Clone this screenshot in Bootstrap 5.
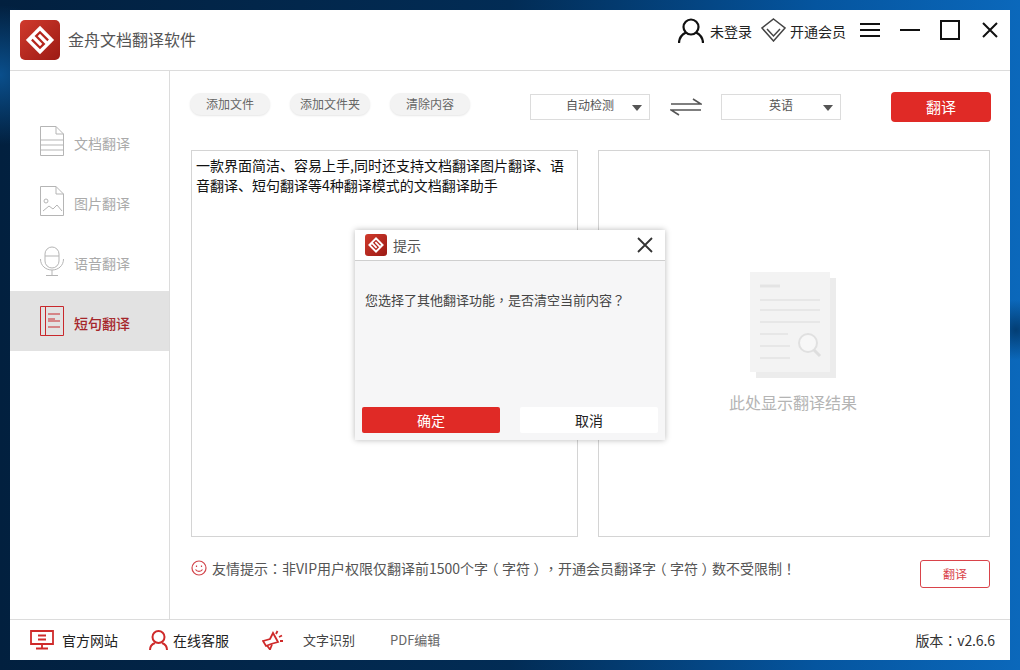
<!DOCTYPE html>
<html lang="zh">
<head>
<meta charset="utf-8">
<title>金舟文档翻译软件</title>
<link rel="stylesheet" href="https://cdn.jsdelivr.net/npm/bootstrap@5.3.0/dist/css/bootstrap.min.css">
<style>
html,body{height:100%;}
body{margin:0;padding:10px;overflow:hidden;font-family:"Noto Sans CJK SC","Liberation Sans",sans-serif;font-size:13px;color:#333;
  background:radial-gradient(circle at 0 75px,#0a4f8c,transparent 70px),radial-gradient(circle at 1016px 330px,#033e74,transparent 30px),linear-gradient(90deg,#02203f 0%,#022c55 50%,#05559f 80%,#0b68bb 100%);}
.app-win{width:1000px;height:650px;background:#fff;position:relative;display:flex;flex-direction:column;}
.app-head{height:61px;flex:none;border-bottom:1px solid #dcdcdc;padding:0 10px;display:flex;align-items:center;}
.app-title{font-size:16px;color:#555;margin-left:8px;padding-bottom:2px;}
.head-tools{margin-left:auto;display:flex;align-items:center;height:100%;padding-bottom:20px;color:#222;font-size:14px;}
.logo-box{background:linear-gradient(135deg,#d03a2c,#9c1a14);border-radius:5px;display:flex;align-items:center;justify-content:center;flex:none;}
.app-mid{flex:1;display:flex;min-height:0;}
.app-side{width:160px;flex:none;border-right:1px solid #dcdcdc;padding-top:40px;}
.side-item{height:60px;display:flex;align-items:center;padding-left:30px;color:#aaa;font-size:14px;gap:10px;}
.side-item span{padding-top:4px;}
.side-on{background:#e2e2e2;color:#a5262a;}
.app-main{flex:1;padding:21px 19px 0 20px;position:relative;min-width:0;}
.tool-row{height:30px;display:flex;align-items:center;}
.pill-btn{width:80px;height:22px;border-radius:11px;background:#f3f3f3;color:#666;font-size:12px;display:flex;align-items:center;justify-content:center;margin-right:20px;margin-bottom:6px;box-shadow:0 1px 2px #e6e6e6;}
.lang-sel{width:120px;height:26px;border:1px solid #dcdcdc;display:flex;align-items:center;justify-content:center;font-size:12px;color:#555;position:relative;padding-bottom:4px;}
.lang-sel::after{content:"";position:absolute;right:7px;top:10px;border:5px solid transparent;border-top:6px solid #555;border-bottom:0;}
.go-btn{width:100px;height:30px;border:0;border-radius:4px;background:#e02a26;color:#fff;font-size:15px;display:flex;align-items:center;justify-content:center;margin-left:50px;}
.panes{display:flex;gap:20px;margin-top:28px;height:387px;margin-left:1px;}
.pane-l{width:387px;border:1px solid #d4d4d4;padding:4px 4px;font-size:14px;line-height:20px;color:#111;}
.pane-r{width:392px;border:1px solid #d4d4d4;display:flex;flex-direction:column;align-items:center;padding:121px 2px 0 0;}
.pane-hint{color:#b4b4b4;font-size:16px;margin-top:12px;}
.tip-row{display:flex;align-items:center;margin-top:22px;height:30px;margin-left:1px;color:#555;font-size:14px;}
.tip-text{margin-left:5px;margin-top:-12px;white-space:nowrap;}
.tip-row svg{margin-top:-12px;}
.ghost-btn{margin-left:auto;width:70px;height:28px;border:1px solid #d9434a;border-radius:3px;color:#d9434a;font-size:12px;display:flex;align-items:center;justify-content:center;margin-right:1px;}
.app-foot{height:41px;flex:none;border-top:1px solid #dcdcdc;display:flex;align-items:center;padding:0 15px 0 20px;font-size:14px;color:#222;}
.foot-link{display:flex;align-items:center;}
.foot-dim{font-size:13px;color:#444;}
.foot-ver{color:#333;letter-spacing:-.1px;}
.dlg{position:absolute;left:345px;top:220px;width:310px;height:210px;background:#f6f6f7;box-shadow:0 0 6px rgba(0,0,0,.28);display:flex;flex-direction:column;}
.dlg-head{height:31px;flex:none;background:#fff;border-bottom:1px solid #cfcfcf;display:flex;align-items:center;padding:0 12px 0 10px;font-size:14px;color:#555;}
.dlg-body{flex:1;padding:29px 10px 0;color:#444;font-size:13px;line-height:20px;}
.dlg-foot{display:flex;justify-content:space-between;padding:0 7px 7px;}
.dlg-ok,.dlg-no{width:138px;height:26px;border:0;border-radius:2px;font-size:14px;display:flex;align-items:center;justify-content:center;}
.dlg-ok{background:#e02a26;color:#fff;}
.dlg-no{background:#fff;color:#222;}
.pun{display:inline-block;width:1em;font-family:"Noto Sans CJK TC",sans-serif;text-align:center;}
.pun-h{display:inline-block;width:1em;text-align:center;font-feature-settings:"halt";}
</style>
</head>
<body>
<div class="app-win">
  <header class="app-head">
    <div class="logo-box" style="width:40px;height:40px">
      <svg width="32" height="32" viewBox="0 0 32 32"><g transform="rotate(45 16 16)"><rect x="6" y="6" width="20" height="20" fill="#fff"/><path d="M22 10.500H10.500V16H21.500V21.500H10" fill="none" stroke="#b5251c" stroke-width="2.200"/></g></svg>
    </div>
    <span class="app-title">金舟文档翻译软件</span>
    <div class="head-tools">
      <svg width="26" height="25" viewBox="0 0 26 25" fill="none" stroke="#111" stroke-width="2.200"><circle cx="13" cy="9" r="7.500"/><path d="M1 25c0-6 4-9 7-10.500M25 25c0-6-4-9-7-10.500"/></svg>
      <span style="margin-left:6px;padding-top:2px">未登录</span>
      <svg style="margin-left:9px" width="25" height="24" viewBox="0 0 25 24" fill="none" stroke="#444" stroke-width="1.500"><path d="M12.500 1 24 10 12.500 23 1 10Z"/><path d="M6 11 12.500 18 19 11"/></svg>
      <span style="margin-left:4px;padding-top:2px">开通会员</span>
      <svg style="margin-left:14px" width="20" height="16" viewBox="0 0 20 16" stroke="#111" stroke-width="2"><path d="M0 2H20M0 8H20M0 14H20"/></svg>
      <svg style="margin-left:20px" width="20" height="4" viewBox="0 0 20 4" stroke="#111" stroke-width="2"><path d="M0 2H20"/></svg>
      <svg style="margin-left:20px" width="20" height="20" viewBox="0 0 20 20" fill="none" stroke="#111" stroke-width="2"><rect x="1" y="1" width="18" height="18"/></svg>
      <svg style="margin-left:22px;margin-right:2px" width="16" height="16" viewBox="0 0 16 16" stroke="#111" stroke-width="2"><path d="M1 1 15 15M15 1 1 15"/></svg>
    </div>
  </header>

  <div class="app-mid">
    <nav class="app-side">
      <div class="side-item">
        <svg width="24" height="30" viewBox="0 0 24 30" fill="none" stroke="#b5b5b5"><path d="M.5.5H16L23.500 8V29.500H.5Z"/><path d="M16 .5V8H23.500M.5 14H23.500M.5 19H23.500M.5 24H23.500"/></svg>
        <span>文档翻译</span>
      </div>
      <div class="side-item">
        <svg width="24" height="30" viewBox="0 0 24 30" fill="none" stroke="#b5b5b5"><path d="M.5.5H16L23.500 8V29.500H.5Z"/><path d="M16 .5V8H23.500M3 25 9 20 13 23 17 19 22 25"/><circle cx="6" cy="15" r="2"/></svg>
        <span>图片翻译</span>
      </div>
      <div class="side-item">
        <svg width="24" height="30" viewBox="0 0 24 30" fill="none" stroke="#b5b5b5"><rect x="5" y="1" width="14" height="21" rx="7"/><path d="M5 10H19M.5 13C.5 20 6 24 12 24S23.500 20 23.500 13M12 24V29M6 29.500H18"/></svg>
        <span>语音翻译</span>
      </div>
      <div class="side-item side-on">
        <svg width="24" height="30" viewBox="0 0 24 30" fill="none" stroke="#c8282c"><path d="M.5.5H23.500V29.500H.5ZM5.500.5V29.500M8 8H20M8 13H15M8 15H20M8 21H20"/></svg>
        <span class="fw-medium">短句翻译</span>
      </div>
    </nav>

    <main class="app-main">
      <div class="tool-row">
        <div class="pill-btn">添加文件</div>
        <div class="pill-btn">添加文件夹</div>
        <div class="pill-btn" style="margin-right:60px">清除内容</div>
        <div class="lang-sel">自动检测</div>
        <svg style="margin:0 19px 0 20px" width="32" height="18" viewBox="0 0 32 18" fill="none" stroke="#555" stroke-width="1.600"><path d="M1 6H31L23 1M31 12H1L9 17"/></svg>
        <div class="lang-sel">英语</div>
        <div class="go-btn">翻译</div>
      </div>
      <div class="panes">
        <div class="pane-l">一款界面简洁、容易上手,同时还支持文档翻译图片翻译、语音翻译、短句翻译等4种翻译模式的文档翻译助手</div>
        <div class="pane-r">
          <svg width="86" height="106" viewBox="0 0 86 106">
            <rect x="6" y="6" width="80" height="100" fill="#ececec"/>
            <rect width="80" height="100" fill="#f3f3f3"/>
            <g stroke="#e4e4e4" stroke-width="1.500"><path d="M10 14H30" stroke-width="3"/><path d="M10 28H70M10 38H70M10 50H70M10 62H38M10 74H40M10 86H40"/></g>
            <circle cx="58" cy="71" r="9" fill="#f7f7f7" stroke="#e0e0e0" stroke-width="2"/><path d="M64 78 70 84" stroke="#dedede" stroke-width="3"/>
          </svg>
          <div class="pane-hint">此处显示翻译结果</div>
        </div>
      </div>
      <div class="tip-row">
        <svg width="16" height="16" viewBox="0 0 16 16" fill="none" stroke="#d2444a" stroke-width="1.200"><circle cx="8" cy="8" r="7"/><path d="M4.500 9.500C6 12 10 12 11.500 9.500M5.500 5.500V7M10.500 5.500V7"/></svg>
        <span class="tip-text">友情提示<span class="pun">：</span>非VIP用户权限仅翻译前1500个字<span class="pun-h">（</span>字符<span class="pun-h">）</span><span class="pun">，</span>开通会员翻译字<span class="pun-h">（</span>字符<span class="pun-h">）</span>数不受限制<span class="pun">！</span></span>
        <div class="ghost-btn">翻译</div>
      </div>
    </main>
  </div>

  <footer class="app-foot">
    <div class="foot-link">
      <svg width="24" height="20" viewBox="0 0 24 20" fill="none" stroke="#cf2a2a" stroke-width="1.800"><path d="M1 1H23V14H1ZM8 5.500H16M8 9.500H16M12 14V18M6 18.500H18"/></svg>
      <span style="margin-left:8px">官方网站</span>
    </div>
    <div class="foot-link" style="margin-left:31px">
      <svg width="19" height="20" viewBox="0 0 19 20" fill="none" stroke="#cf2a2a" stroke-width="2"><circle cx="9.500" cy="7" r="6"/><path d="M1 20c0-4 2-6 5-7M18 20c0-4-2-6-5-7"/></svg>
      <span style="margin-left:5px">在线客服</span>
    </div>
    <div class="foot-link" style="margin-left:33px">
      <svg width="21" height="20" viewBox="0 0 21 20" fill="none" stroke="#cf2a2a" stroke-width="1.800"><path d="M1 11 8 9 11 3 16 12 9 14 4 16ZM5 15.500 8 19.500 10 14.500"/><path d="M14 4l1.500-3M17 7l3-1.500M18 11h3"/></svg>
      <span class="foot-dim" style="margin-left:20px">文字识别</span>
    </div>
    <div class="foot-link foot-dim" style="margin-left:35px;color:#666">PDF编辑</div>
    <div class="ms-auto foot-ver">版本<span class="pun">：</span>v2.6.6</div>
  </footer>

  <div class="dlg" role="dialog">
    <div class="dlg-head">
      <div class="logo-box" style="width:22px;height:22px;border-radius:3px">
        <svg width="18" height="18" viewBox="0 0 32 32"><g transform="rotate(45 16 16)"><rect x="6" y="6" width="20" height="20" fill="#fff"/><path d="M22 10.500H10.500V16H21.500V21.500H10" fill="none" stroke="#b5251c" stroke-width="2.200"/></g></svg>
      </div>
      <span style="margin-left:6px">提示</span>
      <svg class="ms-auto" width="16" height="16" viewBox="0 0 16 16" stroke="#333" stroke-width="1.800"><path d="M1 1 15 15M15 1 1 15"/></svg>
    </div>
    <div class="dlg-body">您选择了其他翻译功能<span class="pun">，</span>是否清空当前内容<span class="pun">？</span></div>
    <div class="dlg-foot">
      <div class="dlg-ok">确定</div>
      <div class="dlg-no">取消</div>
    </div>
  </div>
</div>
<script src="https://cdn.jsdelivr.net/npm/bootstrap@5.3.0/dist/js/bootstrap.bundle.min.js"></script>
</body>
</html>
